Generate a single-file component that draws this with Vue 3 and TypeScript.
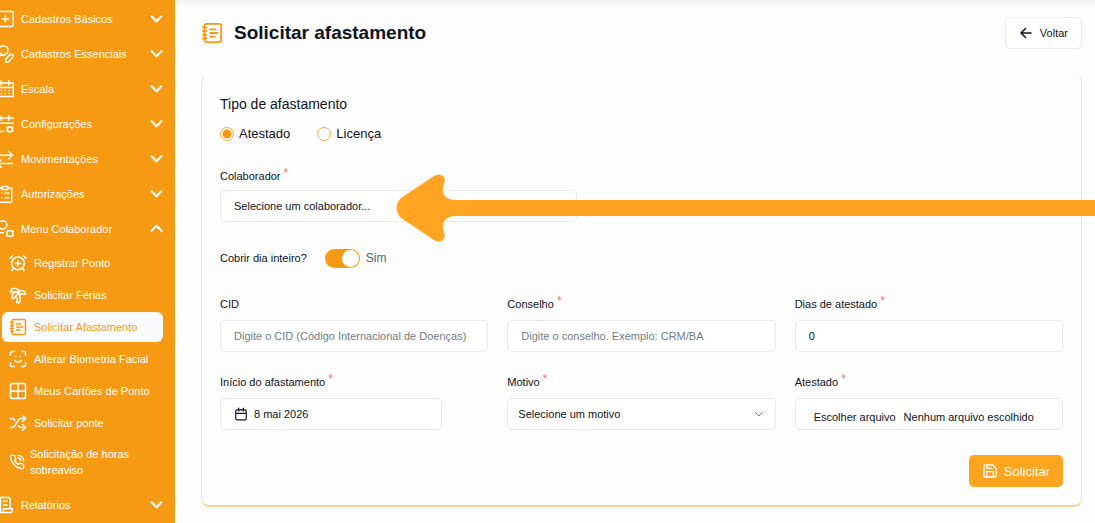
<script setup lang="ts">
import { ref } from 'vue'

type IconName =
  | 'plus' | 'userEdit' | 'calendar' | 'calendarCog' | 'swap' | 'clipboard' | 'userCog'
  | 'alarm' | 'palm' | 'notebook' | 'face' | 'grid' | 'shuffle' | 'phone' | 'scroll'

interface MenuItem { label: string; icon: IconName }

const icons: Record<IconName, string[]> = {
  plus: ['M4 2h17a2 2 0 0 1 2 2v16a2 2 0 0 1-2 2H4a2 2 0 0 1-2-2V4a2 2 0 0 1 2-2z', 'M12.500 8v8M8.500 12h8'],
  userEdit: ['M10 1a6 6 0 1 0 0 12a6 6 0 0 0 0-12z', 'M1 21a10 10 0 0 1 10-8', 'M19 12.500l3 0a2 2 0 0 1 1 3l-5.500 6.500-4.500 1.500v-4.500z'],
  calendar: ['M1 4h22v18H1zM1 10h22M7 1v6M17 1v6', 'M7 14h.01M12 14h.01M17 14h.01M7 18h.01M12 18h.01M17 18h.01'],
  calendarCog: ['M1 4h22M7 1v6M17 1v6M1 11h22M1 22h9', 'M18.500 15.500a3.500 3.500 0 1 0 0 7a3.500 3.500 0 0 0 0-7z', 'M14.500 16.500l1 1M21.500 17.500l1-1M14.500 21.500l1-1M21.500 20.500l1 1'],
  swap: ['M17 2l5 5-5 5M22 7H2', 'M7 13l-5 5 5 5M2 18h20'],
  clipboard: ['M16 4h4a1 1 0 0 1 1 1v17a1 1 0 0 1-1 1H5a1 1 0 0 1-1-1V5a1 1 0 0 1 1-1h3', 'M9 2h6a1 1 0 0 1 1 1v3H8V3a1 1 0 0 1 1-1zM12 11h5M12 17h5M8 11h.01M8 17h.01'],
  userCog: ['M9 1a5.500 5.500 0 1 0 0 11a5.500 5.500 0 0 0 0-11z', 'M1 17h9', 'M18.500 14a4 4 0 1 0 0 8a4 4 0 0 0 0-8z', 'M14 15l1 1M22 16l1-1M14 21l1-1M22 20l1 1'],
  alarm: ['M12 4a8.500 8.500 0 1 0 0 17a8.500 8.500 0 0 0 0-17z', 'M5 2L1.500 5.500M22.500 5.500L19 2M6 19l-2 3M18 19l2 3M12 9v7M8.500 12.500h7'],
  palm: ['M13 8c0-2.760-2.460-5-5.500-5S2 5.240 2 8h2l1-1 1 1h4', 'M13 7.140A5.820 5.820 0 0 1 16.500 6c3.040 0 5.500 2.240 5.500 5h-3l-1-1-1 1h-3', 'M5.890 9.710c-2.150 2.150-2.300 5.470-.350 7.430l4.240-4.250.700-.700.710-.710 2.120-2.120c-1.950-1.960-5.270-1.800-7.420.350', 'M11 15.500c.500 2.500-.170 4.500-1 6.500h4c2-5.500-.500-12-1-14'],
  notebook: ['M2 6h4M2 10h4M2 14h4M2 18h4', 'M6 2h14a2 2 0 0 1 2 2v16a2 2 0 0 1-2 2H6a2 2 0 0 1-2-2V4a2 2 0 0 1 2-2z', 'M10 8h6M10 12h8M10 16h5'],
  face: ['M2 7V4a2 2 0 0 1 2-2h3M17 2h3a2 2 0 0 1 2 2v3M22 17v3a2 2 0 0 1-2 2h-3M7 22H4a2 2 0 0 1-2-2v-3', 'M8 14s1.500 2 4 2 4-2 4-2M9 9h.01M15 9h.01'],
  grid: ['M4 2h16a2 2 0 0 1 2 2v16a2 2 0 0 1-2 2H4a2 2 0 0 1-2-2V4a2 2 0 0 1 2-2z', 'M12 2v20M2 12h20'],
  shuffle: ['M18 14l4 4-4 4M18 2l4 4-4 4', 'M2 18h2a4 4 0 0 0 3.300-1.700l5.400-8.600A4 4 0 0 1 16 6h6', 'M2 6h2a4 4 0 0 1 3.600 2.200M22 18h-6a4 4 0 0 1-3.300-1.800l-.400-.500'],
  phone: ['M22 16.920v3a2 2 0 0 1-2.180 2 19.790 19.790 0 0 1-8.630-3.070 19.500 19.500 0 0 1-6-6 19.790 19.790 0 0 1-3.070-8.670A2 2 0 0 1 4.110 2h3a2 2 0 0 1 2 1.720c.130.960.360 1.900.700 2.810a2 2 0 0 1-.450 2.110L8.090 9.910a16 16 0 0 0 6 6l1.270-1.270a2 2 0 0 1 2.110-.450c.910.340 1.850.570 2.810.700A2 2 0 0 1 22 16.920z', 'M14 2a9 9 0 0 1 8 8M14 6a5 5 0 0 1 4 4'],
  scroll: ['M19 16V4a2 2 0 0 0-2-2H4a2 2 0 0 1 2 2v15a3 3 0 0 1-3 3h16a3 3 0 0 0 3-3v-2H10v2a3 3 0 0 1-3 3', 'M10 7h5M10 12h5'],
}

const mainItems: MenuItem[] = [
  { label: 'Cadastros Básicos', icon: 'plus' },
  { label: 'Cadastros Essenciais', icon: 'userEdit' },
  { label: 'Escala', icon: 'calendar' },
  { label: 'Configurações', icon: 'calendarCog' },
  { label: 'Movimentações', icon: 'swap' },
  { label: 'Autorizações', icon: 'clipboard' },
  { label: 'Menu Colaborador', icon: 'userCog' },
]

const subItems: MenuItem[] = [
  { label: 'Registrar Ponto', icon: 'alarm' },
  { label: 'Solicitar Férias', icon: 'palm' },
  { label: 'Solicitar Afastamento', icon: 'notebook' },
  { label: 'Alterar Biometria Facial', icon: 'face' },
  { label: 'Meus Cartões de Ponto', icon: 'grid' },
  { label: 'Solicitar ponte', icon: 'shuffle' },
  { label: 'Solicitação de horas sobreaviso', icon: 'phone' },
]

const openMenu = ref('Menu Colaborador')
const activeSub = ref('Solicitar Afastamento')
const kind = ref('atestado')
const wholeDay = ref(true)
const days = ref('0')
const cid = ref('')
const council = ref('')
const fileName = ref('')

function toggle(label: string) {
  openMenu.value = openMenu.value === label ? '' : label
}

function pickFile(event: Event) {
  fileName.value = (event.target as HTMLInputElement).files?.[0]?.name ?? ''
}
</script>

<template>
  <div class="app">
    <nav class="sidebar" aria-label="Menu principal">
      <template v-for="item in mainItems" :key="item.label">
        <button type="button" class="group" :aria-expanded="openMenu === item.label" @click="toggle(item.label)">
          <svg class="icon" viewBox="0 0 24 24" aria-hidden="true"><path v-for="d in icons[item.icon]" :key="d" :d="d" /></svg>
          <span class="group-label">{{ item.label }}</span>
          <svg class="chevron" :class="{ up: openMenu === item.label }" viewBox="0 0 12 12" aria-hidden="true"><path d="M1.500 4L6 8.500 10.500 4" /></svg>
        </button>
      </template>
      <ul v-if="openMenu === 'Menu Colaborador'" class="subs">
        <li v-for="sub in subItems" :key="sub.label">
          <a href="#" class="sub" :class="{ active: activeSub === sub.label, tall: sub.icon === 'phone' }" @click.prevent="activeSub = sub.label">
            <svg class="icon" viewBox="0 0 24 24" aria-hidden="true"><path v-for="d in icons[sub.icon]" :key="d" :d="d" /></svg>
            <span>{{ sub.label }}</span>
          </a>
        </li>
      </ul>
      <button type="button" class="group" :aria-expanded="openMenu === 'Relatórios'" @click="toggle('Relatórios')">
        <svg class="icon" viewBox="0 0 24 24" aria-hidden="true"><path v-for="d in icons.scroll" :key="d" :d="d" /></svg>
        <span class="group-label">Relatórios</span>
        <svg class="chevron" viewBox="0 0 12 12" aria-hidden="true"><path d="M1.500 4L6 8.500 10.500 4" /></svg>
      </button>
    </nav>

    <main class="main">
      <header class="header">
        <svg class="title-icon" viewBox="0 0 24 24" aria-hidden="true"><path v-for="d in icons.notebook" :key="d" :d="d" /></svg>
        <h1>Solicitar afastamento</h1>
        <button type="button" class="back">
          <svg viewBox="0 0 12 12" aria-hidden="true"><path d="M11 6H1M5.500 1.500L1 6l4.500 4.500" /></svg>
          Voltar
        </button>
      </header>

      <form class="card" @submit.prevent>
        <fieldset class="kinds">
          <legend>Tipo de afastamento</legend>
          <div class="radios">
            <label><input v-model="kind" type="radio" name="kind" value="atestado" />Atestado</label>
            <label><input v-model="kind" type="radio" name="kind" value="licenca" />Licença</label>
          </div>
        </fieldset>

        <div class="field employee">
          <label for="employee">Colaborador <sup>*</sup></label>
          <div class="employee-box">
            <select id="employee" class="box">
              <option>Selecione um colaborador...</option>
            </select>
            <svg class="pointer" viewBox="0 0 700 70" preserveAspectRatio="xMinYMid meet" aria-hidden="true">
              <path d="M5 25L38 3Q43 0 47 3Q50 6 48 11C45 20 48 25 58 27H700V43H58C48 44 45 51 48 59Q50 64 47 67Q43 70 38 67L5 45Q-4 35 5 25Z" />
            </svg>
          </div>
        </div>

        <div class="switch-row">
          <label for="whole-day">Cobrir dia inteiro?</label>
          <input id="whole-day" v-model="wholeDay" type="checkbox" role="switch" class="switch" />
          <span class="switch-value">{{ wholeDay ? 'Sim' : 'Não' }}</span>
        </div>

        <div class="grid">
          <div class="field">
            <label for="cid">CID</label>
            <input id="cid" v-model="cid" class="box" type="text" placeholder="Digite o CID (Código Internacional de Doenças)" />
          </div>
          <div class="field">
            <label for="council">Conselho <sup>*</sup></label>
            <input id="council" v-model="council" class="box" type="text" placeholder="Digite o conselho. Exemplo: CRM/BA" />
          </div>
          <div class="field">
            <label for="days">Dias de atestado <sup>*</sup></label>
            <input id="days" v-model="days" class="box" type="text" inputmode="numeric" />
          </div>
          <div class="field">
            <label for="start">Início do afastamento <sup>*</sup></label>
            <button id="start" type="button" class="box date">
              <svg viewBox="0 0 24 24" aria-hidden="true"><path d="M5 5h14a2 2 0 0 1 2 2v13a2 2 0 0 1-2 2H5a2 2 0 0 1-2-2V7a2 2 0 0 1 2-2zM3 11h18M8 2v5M16 2v5" /></svg>
              8 mai 2026
            </button>
          </div>
          <div class="field">
            <label for="reason">Motivo <sup>*</sup></label>
            <div class="select-wrap">
              <select id="reason" class="box reason">
                <option>Selecione um motivo</option>
              </select>
              <svg class="caret" viewBox="0 0 10 10" aria-hidden="true"><path d="M1.500 3.500L5 7l3.500-3.500" /></svg>
            </div>
          </div>
          <div class="field">
            <label for="file">Atestado <sup>*</sup></label>
            <label class="box file">
              <input id="file" type="file" class="file-input" @change="pickFile" />
              <span class="file-action">Escolher arquivo</span>
              <span>{{ fileName || 'Nenhum arquivo escolhido' }}</span>
            </label>
          </div>
        </div>

        <button type="submit" class="submit">
          <svg viewBox="0 0 24 24" aria-hidden="true"><path d="M5 3h11l5 5v11a2 2 0 0 1-2 2H5a2 2 0 0 1-2-2V5a2 2 0 0 1 2-2zM7 21v-8h10v8M7 3v5h8" /></svg>
          Solicitar
        </button>
      </form>
    </main>
  </div>
</template>

<style>
html,
body {
  background: #fdfdfd;
  overflow: hidden;
}
</style>

<style scoped>
.app {
  display: flex;
  min-height: 100vh;
  font-family: "Liberation Sans", Arial, sans-serif;
  font-size: 11px;
  color: #0f1324;
}
.app *,
.app *::before {
  box-sizing: border-box;
}
button,
input,
select {
  font: inherit;
  color: inherit;
}
svg {
  flex: none;
  fill: none;
  stroke: currentColor;
  stroke-width: 2;
  stroke-linecap: round;
  stroke-linejoin: round;
}
.sidebar {
  flex: none;
  width: 175px;
  padding: 1px 12px 0 0;
  background: #f79a13;
  color: #fff;
}
.group {
  display: flex;
  align-items: center;
  width: 100%;
  height: 35px;
  padding: 0;
  border: 0;
  background: none;
  text-align: left;
}
.group .icon {
  width: 18px;
  height: 18px;
  margin: 0 7px 0 -4px;
}
.group-label {
  flex: 1;
}
.chevron {
  width: 13px;
  height: 13px;
}
.up {
  transform: rotate(180deg);
}
.subs {
  display: flex;
  flex-direction: column;
  gap: 2px;
  margin: 2px 0 3px;
  padding: 0 0 0 2px;
  list-style: none;
}
.sub {
  display: flex;
  align-items: center;
  gap: 7px;
  height: 30px;
  padding-left: 7px;
  border-radius: 6px;
  color: inherit;
  line-height: 16px;
  text-decoration: none;
}
.sub .icon {
  width: 18px;
  height: 18px;
}
.sub.active {
  background: #f8fafc;
  color: #f79a13;
}
.sub.tall {
  height: 44px;
  gap: 5px;
  padding-right: 24px;
}
.sub.tall .icon {
  width: 16px;
  height: 16px;
}
.main {
  flex: 1;
  min-width: 0;
  padding: 17px 13px 16px 26px;
  background: linear-gradient(#f4f4f4, #fdfdfd 8px);
}
.header {
  display: flex;
  align-items: center;
  height: 32px;
  margin-bottom: 26px;
}
.title-icon {
  width: 22px;
  height: 24px;
  margin-right: 11px;
  color: #f79a13;
}
h1 {
  flex: 1;
  margin: 0;
  font-size: 19px;
  line-height: 24px;
}
.back {
  display: flex;
  align-items: center;
  gap: 8px;
  height: 32px;
  padding: 0 13px 0 14px;
  border: 1px solid #e8eaef;
  border-radius: 5px;
  background: #fff;
}
.back svg {
  width: 12px;
  height: 12px;
  stroke-width: 1.5;
}
.card {
  display: flex;
  flex-direction: column;
  padding: 19px 18px 18px;
  border: 1px solid #fddfb5;
  border-top-color: transparent;
  border-bottom: 2px solid #fbcf8f;
  border-radius: 8px;
}
.kinds {
  margin: 0;
  padding: 0;
  border: 0;
}
legend {
  padding: 0;
  font-size: 14px;
  line-height: 18px;
}
.radios {
  display: flex;
  gap: 27px;
  margin-top: 13px;
  font-size: 13px;
  line-height: 16px;
}
.radios label {
  display: flex;
  align-items: center;
  gap: 5px;
}
.radios input {
  appearance: none;
  width: 14px;
  height: 14px;
  margin: 0;
  border: 1px solid #f9ac42;
  border-radius: 50%;
}
.radios input:checked {
  background: radial-gradient(circle, #f79a13 4px, transparent 5px);
}
.field {
  display: flex;
  flex-direction: column;
  gap: 8px;
}
.field > label:first-child {
  line-height: 16px;
}
sup {
  color: #f87171;
  font-size: 12px;
  line-height: 0;
  vertical-align: 3px;
}
.box {
  display: flex;
  align-items: center;
  width: 100%;
  height: 32px;
  margin: 0;
  padding: 0 13px;
  border: 1px solid #e9e9eb;
  border-radius: 5px;
  background: #fff;
  text-align: left;
  appearance: none;
}
.box::placeholder {
  color: #737b86;
  opacity: 1;
}
.employee {
  gap: 6px;
  margin-top: 26px;
}
.employee-box {
  position: relative;
}
.employee .box {
  width: 357px;
}
.pointer {
  position: absolute;
  top: -17px;
  left: 176px;
  width: 700px;
  height: 70px;
  stroke: none;
  fill: #ffa523;
}
.switch-row {
  display: flex;
  align-items: center;
  height: 20px;
  margin-top: 26px;
}
.switch {
  display: flex;
  align-items: center;
  justify-content: flex-end;
  appearance: none;
  width: 35px;
  height: 19px;
  margin: 0 6px 0 18px;
  padding: 1px;
  border-radius: 10px;
  background: #f79a13;
}
.switch::before {
  content: "";
  width: 17px;
  height: 17px;
  border-radius: 50%;
  background: #fff;
}
.switch:not(:checked) {
  justify-content: flex-start;
  background: #cbd5e1;
}
.switch-value {
  color: #5b6472;
  font-size: 12px;
}
.grid {
  display: grid;
  grid-template-columns: repeat(3, minmax(0, 1fr));
  gap: 22px 19px;
  margin-top: 28px;
}
.date {
  width: 222px;
  gap: 6px;
}
.date svg {
  width: 14px;
  height: 14px;
}
.select-wrap {
  display: flex;
  align-items: center;
}
.reason {
  padding: 0 30px 0 10px;
}
.caret {
  width: 10px;
  height: 10px;
  margin-left: -22px;
  margin-right: 12px;
  color: #777;
  stroke-width: 1;
}
.file {
  gap: 8px;
  padding: 5px 18px 0;
  white-space: nowrap;
}
.file-input {
  position: absolute;
  width: 1px;
  height: 1px;
  opacity: 0;
}
.submit {
  display: flex;
  align-items: center;
  align-self: flex-end;
  gap: 6px;
  height: 32px;
  margin-top: 25px;
  padding: 0 13px;
  border: 0;
  border-radius: 5px;
  background: #ffa41f;
  color: #fff;
  font-size: 13px;
}
.submit svg {
  width: 16px;
  height: 16px;
}
</style>
